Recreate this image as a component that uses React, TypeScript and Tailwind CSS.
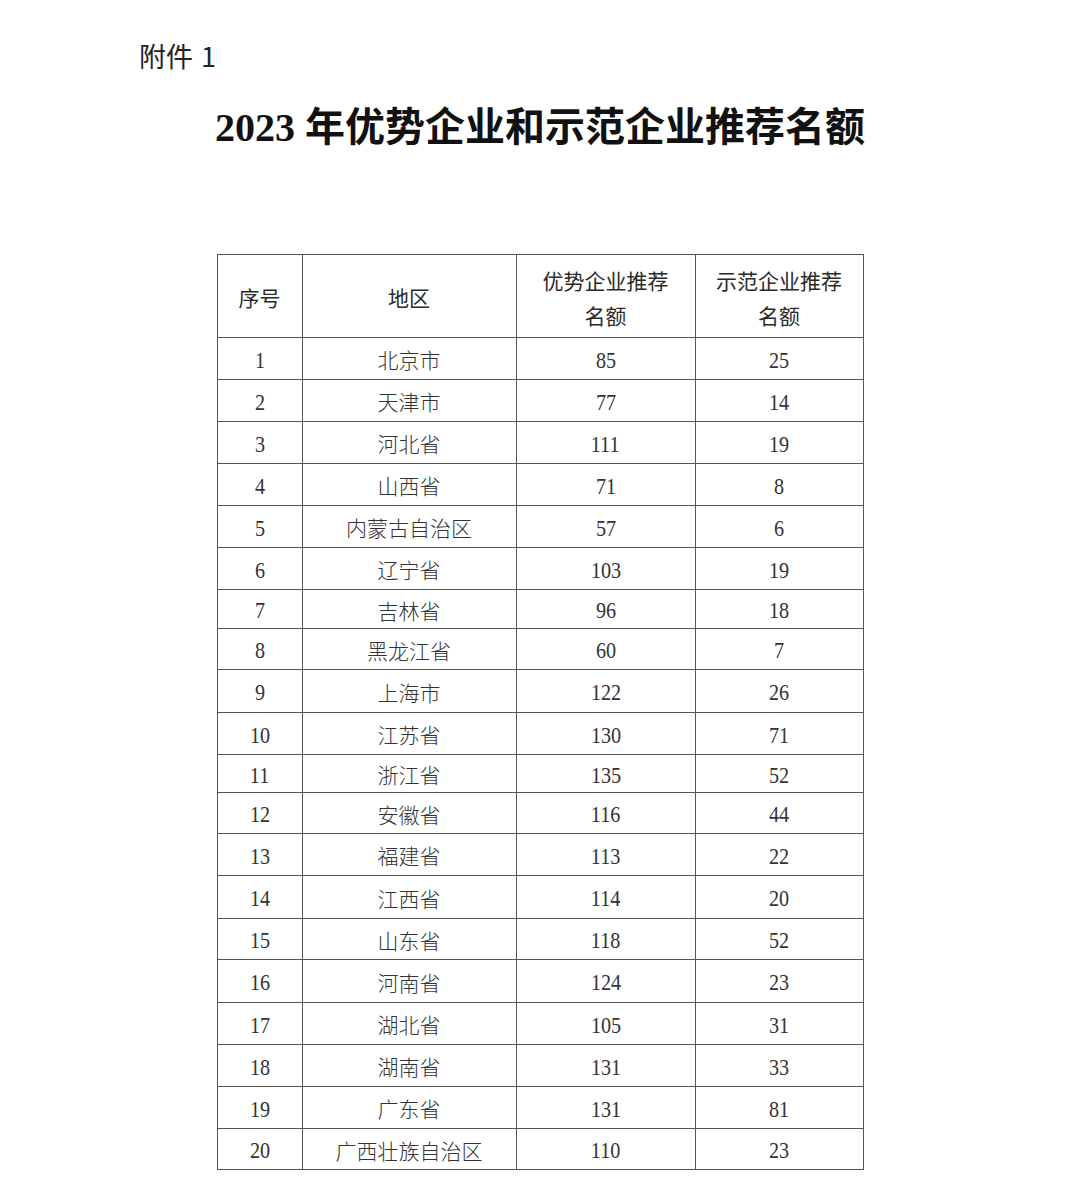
const rows = [
  { no: 1, region: '北京市', adv: 85, demo: 25, h: 'h-[42px]' },
  { no: 2, region: '天津市', adv: 77, demo: 14, h: 'h-[42px]' },
  { no: 3, region: '河北省', adv: 111, demo: 19, h: 'h-[42px]' },
  { no: 4, region: '山西省', adv: 71, demo: 8, h: 'h-[42px]' },
  { no: 5, region: '内蒙古自治区', adv: 57, demo: 6, h: 'h-[42px]' },
  { no: 6, region: '辽宁省', adv: 103, demo: 19, h: 'h-[42px]' },
  { no: 7, region: '吉林省', adv: 96, demo: 18, h: 'h-[39px]' },
  { no: 8, region: '黑龙江省', adv: 60, demo: 7, h: 'h-[41px]' },
  { no: 9, region: '上海市', adv: 122, demo: 26, h: 'h-[43px]' },
  { no: 10, region: '江苏省', adv: 130, demo: 71, h: 'h-[42px]' },
  { no: 11, region: '浙江省', adv: 135, demo: 52, h: 'h-[38px]' },
  { no: 12, region: '安徽省', adv: 116, demo: 44, h: 'h-[41px]' },
  { no: 13, region: '福建省', adv: 113, demo: 22, h: 'h-[42px]' },
  { no: 14, region: '江西省', adv: 114, demo: 20, h: 'h-[43px]' },
  { no: 15, region: '山东省', adv: 118, demo: 52, h: 'h-[41px]' },
  { no: 16, region: '河南省', adv: 124, demo: 23, h: 'h-[43px]' },
  { no: 17, region: '湖北省', adv: 105, demo: 31, h: 'h-[42px]' },
  { no: 18, region: '湖南省', adv: 131, demo: 33, h: 'h-[42px]' },
  { no: 19, region: '广东省', adv: 131, demo: 81, h: 'h-[42px]' },
  { no: 20, region: '广西壮族自治区', adv: 110, demo: 23, h: 'h-[41px]' },
]

const cjk = "font-['Noto_Sans_CJK_SC',sans-serif]"
const cell = 'border border-[#555] p-0 text-center align-middle'

function Num({ value }: { value: number }) {
  return (
    <span className="inline-block translate-y-[2px] scale-x-[0.84] font-['Liberation_Serif',serif] text-[24px] leading-none text-[#333]">
      {value}
    </span>
  )
}

export default function App() {
  return (
    <div className="min-h-[1191px] w-[1080px] bg-white text-[#222]">
      <div className={`${cjk} pl-[139px] pt-[40px] text-[27px] leading-[32px] text-[#222]`}>
        附件<span className="ml-[8px]">1</span>
      </div>
      <h1 className="mt-[27px] text-center text-[40px] font-bold leading-[50px] text-[#111]">
        <span className="font-['Liberation_Serif',serif]">2023 </span>
        <span className={cjk}>年优势企业和示范企业推荐名额</span>
      </h1>

      <table className="mx-auto mt-[101px] w-[646px] table-fixed border-collapse">
        <colgroup>
          <col className="w-[85px]" />
          <col className="w-[214px]" />
          <col className="w-[179px]" />
          <col className="w-[168px]" />
        </colgroup>
        <thead>
          <tr className={`h-[83px] ${cjk} text-[21px] leading-[35px] text-[#2a2a2a]`}>
            <th className={`${cell} pt-[3px] font-normal`}>序号</th>
            <th className={`${cell} pt-[3px] font-normal`}>地区</th>
            <th className={`${cell} pt-[3px] font-normal`}>
              优势企业推荐
              <br />
              名额
            </th>
            <th className={`${cell} pt-[3px] font-normal`}>
              示范企业推荐
              <br />
              名额
            </th>
          </tr>
        </thead>
        <tbody>
          {rows.map((r) => (
            <tr key={r.no} className={r.h}>
              <td className={cell}>
                <Num value={r.no} />
              </td>
              <td className={`${cell} ${cjk} pt-[2px] text-[21px] font-light leading-none text-[#333]`}>
                {r.region}
              </td>
              <td className={cell}>
                <Num value={r.adv} />
              </td>
              <td className={cell}>
                <Num value={r.demo} />
              </td>
            </tr>
          ))}
        </tbody>
      </table>
    </div>
  )
}
